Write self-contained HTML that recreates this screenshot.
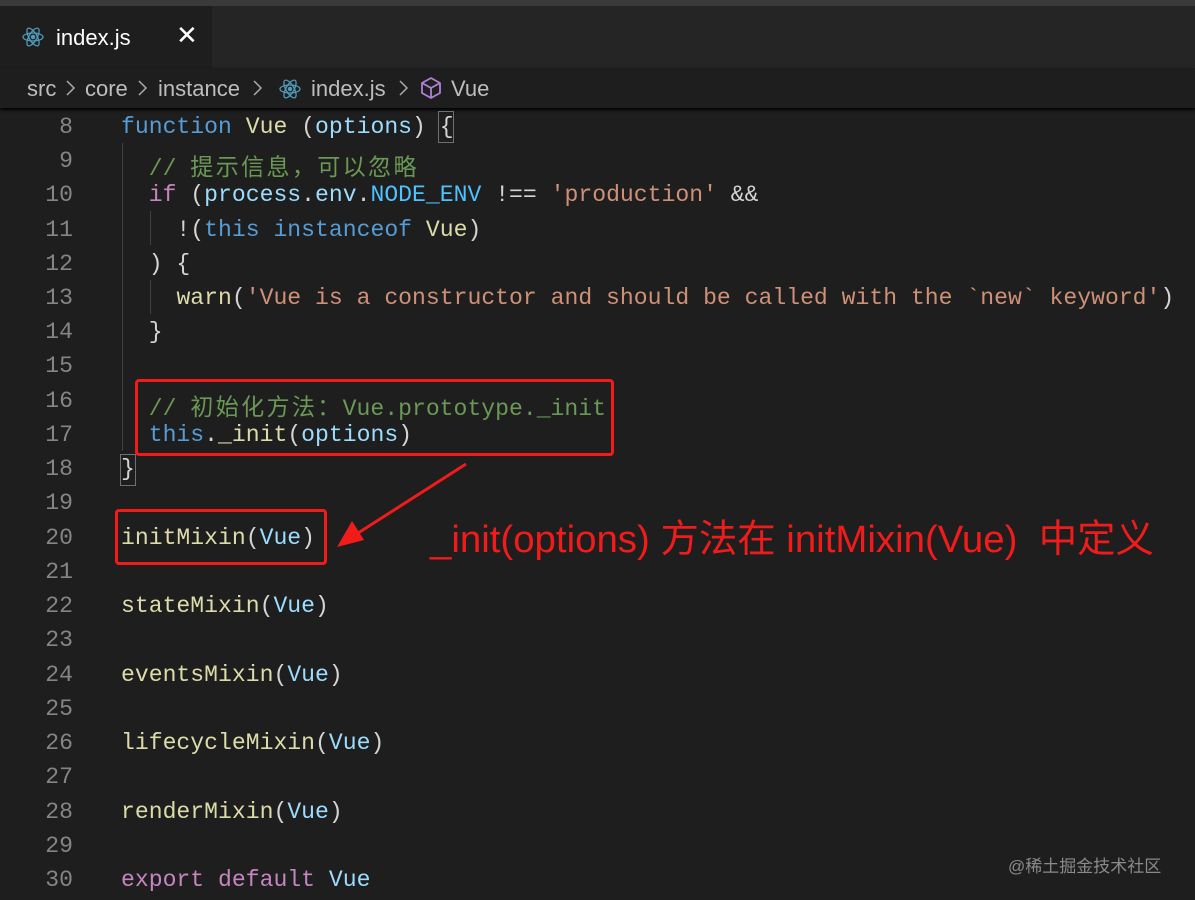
<!DOCTYPE html>
<html><head><meta charset="utf-8"><style>
body{margin:0;width:1195px;height:900px;background:#1e1e1e;overflow:hidden;position:relative;font-family:"Liberation Mono","Noto Sans CJK SC",monospace}
.top{position:absolute;left:0;top:0;width:1195px;height:6px;background:#3a3a3a}
.tabbar{position:absolute;left:0;top:6px;width:1195px;height:62px;background:#252526}
.tab{position:absolute;left:0;top:6px;width:212px;height:62px;background:#1e1e1e;color:#fff;font:22px "Liberation Sans",sans-serif}
.crumb{position:absolute;left:0;top:68px;width:1195px;height:40px;background:#1e1e1e;color:#bdbdbd;font:22px "Liberation Sans",sans-serif;box-shadow:0 2px 3px #000}
.crumb span{position:absolute;top:8px}
.ln{position:absolute;left:0;width:73px;text-align:right;color:#858585;font-size:23.1px}
.cd{position:absolute;left:121px;white-space:pre;color:#d4d4d4;font-size:23.1px}
.k{color:#569cd6}.f{color:#dcdcaa}.v{color:#9cdcfe}.c{color:#6a9955}.s{color:#ce9178}.p{color:#c586c0}.n{color:#4fc1ff}
.cj{letter-spacing:2.3px}
.g{position:absolute;width:1px;background:#404040}
.box{position:absolute;border:3px solid #f01c1c;border-radius:4px}
</style></head><body>
<div class="top"></div><div class="tabbar"></div>
<div class="tab">
<svg style="position:absolute;left:22px;top:20px" width="22" height="22" viewBox="-11 -11 22 22" fill="none" stroke="#519aba" stroke-width="1.3"><ellipse rx="10" ry="4"/><ellipse rx="10" ry="4" transform="rotate(60)"/><ellipse rx="10" ry="4" transform="rotate(120)"/><circle r="1.6" fill="#519aba"/></svg>
<span style="position:absolute;left:56px;top:19px">index.js</span>
<span style="position:absolute;left:176px;top:14px;font-size:26px">✕</span>
</div>
<div class="crumb">
<span style="left:27px">src</span>
<span style="left:85px">core</span>
<span style="left:158px">instance</span>
<span style="left:311px">index.js</span>
<span style="left:451px">Vue</span>
<svg style="position:absolute;left:0;top:0" width="500" height="40" fill="none" stroke="#aaa" stroke-width="1.5"><path d="M67 13l7 7-7 7M139 13l7 7-7 7M254 13l7 7-7 7M400 13l7 7-7 7"/></svg>
<svg style="position:absolute;left:279px;top:10px" width="22" height="22" viewBox="-11 -11 22 22" fill="none" stroke="#519aba" stroke-width="1.3"><ellipse rx="10" ry="4"/><ellipse rx="10" ry="4" transform="rotate(60)"/><ellipse rx="10" ry="4" transform="rotate(120)"/><circle r="1.6" fill="#519aba"/></svg>
<svg style="position:absolute;left:419px;top:8px" width="24" height="24" viewBox="0 0 24 24" fill="none" stroke="#b180d7" stroke-width="1.8" stroke-linejoin="round"><path d="M12 2 21 7v10l-9 5-9-5V7z M3 7l9 5 9-5 M12 12v10"/></svg>
</div>
<div class="g" style="left:122px;top:143px;height:308px"></div>
<div class="g" style="left:150px;top:211px;height:34px"></div>
<div class="g" style="left:150px;top:280px;height:34px"></div>
<div style="position:absolute;left:120px;top:454px;width:14px;height:30px;border:1px solid #707070"></div>
<div style="position:absolute;left:438px;top:111px;width:14px;height:30px;border:1px solid #707070"></div>

<div class="ln" style="top:114px">8</div><div class="cd" style="top:114px"><span class="k">function</span> <span class="f">Vue</span> (<span class="v">options</span>) {</div>
<div class="ln" style="top:148px">9</div><div class="cd" style="top:148px">  <span class="c">// <span class="cj">提示信息，可以忽略</span></span></div>
<div class="ln" style="top:182px">10</div><div class="cd" style="top:182px">  <span class="p">if</span> (<span class="v">process</span>.<span class="v">env</span>.<span class="n">NODE_ENV</span> !== <span class="s">'production'</span> &amp;&amp;</div>
<div class="ln" style="top:217px">11</div><div class="cd" style="top:217px">    !(<span class="k">this</span> <span class="k">instanceof</span> <span class="f">Vue</span>)</div>
<div class="ln" style="top:251px">12</div><div class="cd" style="top:251px">  ) {</div>
<div class="ln" style="top:285px">13</div><div class="cd" style="top:285px">    <span class="f">warn</span>(<span class="s">'Vue is a constructor and should be called with the `new` keyword'</span>)</div>
<div class="ln" style="top:319px">14</div><div class="cd" style="top:319px">  }</div>
<div class="ln" style="top:353px">15</div>
<div class="ln" style="top:388px">16</div><div class="cd" style="top:388px">  <span class="c">// <span class="cj">初始化方法：</span>Vue.prototype._init</span></div>
<div class="ln" style="top:422px">17</div><div class="cd" style="top:422px">  <span class="k">this</span>.<span class="f">_init</span>(<span class="v">options</span>)</div>
<div class="ln" style="top:456px">18</div><div class="cd" style="top:456px">}</div>
<div class="ln" style="top:490px">19</div>
<div class="ln" style="top:525px">20</div><div class="cd" style="top:525px"><span class="f">initMixin</span>(<span class="v">Vue</span>)</div>
<div class="ln" style="top:559px">21</div>
<div class="ln" style="top:593px">22</div><div class="cd" style="top:593px"><span class="f">stateMixin</span>(<span class="v">Vue</span>)</div>
<div class="ln" style="top:627px">23</div>
<div class="ln" style="top:662px">24</div><div class="cd" style="top:662px"><span class="f">eventsMixin</span>(<span class="v">Vue</span>)</div>
<div class="ln" style="top:696px">25</div>
<div class="ln" style="top:730px">26</div><div class="cd" style="top:730px"><span class="f">lifecycleMixin</span>(<span class="v">Vue</span>)</div>
<div class="ln" style="top:764px">27</div>
<div class="ln" style="top:799px">28</div><div class="cd" style="top:799px"><span class="f">renderMixin</span>(<span class="v">Vue</span>)</div>
<div class="ln" style="top:833px">29</div>
<div class="ln" style="top:867px">30</div><div class="cd" style="top:867px"><span class="p">export</span> <span class="p">default</span> <span class="v">Vue</span></div>

<div class="box" style="left:135px;top:379px;width:473px;height:71px"></div>
<div class="box" style="left:115px;top:509px;width:206px;height:50px"></div>
<svg style="position:absolute;left:0;top:0" width="1195" height="900"><line x1="466" y1="464" x2="355" y2="535" stroke="#f01c1c" stroke-width="3"/><polygon points="337,547 352,521 364,540" fill="#f01c1c"/></svg>
<div style="position:absolute;left:430px;top:508px;color:#f01c1c;font:38.4px 'Liberation Sans','Noto Sans CJK SC',sans-serif;white-space:pre">_init(options) 方法在 initMixin(Vue)  中定义</div>
<div style="position:absolute;left:1008px;top:852px;color:#8a8a8a;font:17px 'Liberation Sans','Noto Sans CJK SC',sans-serif">@稀土掘金技术社区</div>
</body></html>
